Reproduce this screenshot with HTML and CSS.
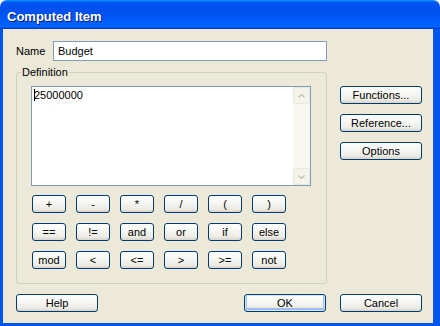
FILE: index.html
```html
<!DOCTYPE html>
<html lang="en">
<head>
    <meta charset="UTF-8">
    <title>Computed Item</title>
    <link rel="stylesheet" href="styles.css">
</head>
<body>
    <div class="window">
        <div class="titlebar">Computed Item</div>
        <div class="frame">
            <div class="name-row">
                <label for="name">Name</label>
                <input type="text" id="name" class="field" value="Budget">
            </div>

            <div class="main-row">
                <fieldset class="group">
                    <legend>Definition</legend>
                    <div class="editor">
                        <div class="editor-text"><span class="caret"></span>25000000</div>
                        <div class="scrollbar">
                            <div class="arrow">
                                <svg width="7" height="4" viewBox="0 0 7 4"><path d="M0.5 3.5 L3.5 0.5 L6.5 3.5" fill="none" stroke="#c3c2b8" stroke-width="1.4"/></svg>
                            </div>
                            <div class="track"></div>
                            <div class="arrow">
                                <svg width="7" height="4" viewBox="0 0 7 4"><path d="M0.5 0.5 L3.5 3.5 L6.5 0.5" fill="none" stroke="#c3c2b8" stroke-width="1.4"/></svg>
                            </div>
                        </div>
                    </div>
                    <div class="ops">
                        <button class="btn op">+</button>
                        <button class="btn op">-</button>
                        <button class="btn op">*</button>
                        <button class="btn op">/</button>
                        <button class="btn op">(</button>
                        <button class="btn op">)</button>
                        <button class="btn op">==</button>
                        <button class="btn op">!=</button>
                        <button class="btn op">and</button>
                        <button class="btn op">or</button>
                        <button class="btn op">if</button>
                        <button class="btn op">else</button>
                        <button class="btn op">mod</button>
                        <button class="btn op">&lt;</button>
                        <button class="btn op">&lt;=</button>
                        <button class="btn op">&gt;</button>
                        <button class="btn op">&gt;=</button>
                        <button class="btn op">not</button>
                    </div>
                </fieldset>

                <div class="side">
                    <button class="btn wide">Functions...</button>
                    <button class="btn wide">Reference...</button>
                    <button class="btn wide">Options</button>
                </div>
            </div>

            <div class="bottom-row">
                <button class="btn wide">Help</button>
                <div class="spacer"></div>
                <button class="btn wide default">OK</button>
                <button class="btn wide">Cancel</button>
            </div>
        </div>
    </div>
</body>
</html>
```

FILE: styles.css
```css
html, body {
    margin: 0;
    padding: 0;
}
body {
    width: 440px;
    height: 326px;
    overflow: hidden;
    font-family: 'Liberation Sans', Arial, sans-serif;
    font-size: 11px;
    color: #000;
}
.window {
    width: 440px;
    height: 326px;
    display: flex;
    flex-direction: column;
}
.titlebar {
    height: 29px;
    box-sizing: border-box;
    padding: 3px 0 0 7px;
    display: flex;
    align-items: center;
    border-radius: 7px 7px 0 0;
    background: linear-gradient(#0997ff 0, #0053ee 9%, #0050ee 40%, #0062fb 85%, #0066ff 92%, #0040d8 97%, #003dd7 100%);
    color: #fff;
    font-size: 13px;
    font-weight: bold;
    text-shadow: 1px 1px 0 #0a1883;
}
.frame {
    flex: 1;
    box-sizing: border-box;
    background-color: #ece9d8;
    border-style: solid;
    border-color: #0055ea;
    border-width: 0 7px 3px 3px;
    padding: 12px 11px 0 13px;
}
.name-row {
    display: flex;
    align-items: center;
    height: 20px;
}
.name-row label {
    width: 37px;
}
.field {
    width: 274px;
    height: 20px;
    box-sizing: border-box;
    margin: 0;
    border: 1px solid #7f9db9;
    padding: 0 4px;
    font-family: inherit;
    font-size: 11px;
    background: #fff;
    outline: none;
}
.main-row {
    display: flex;
    margin-top: 5px;
}
.group {
    width: 311px;
    height: 218px;
    box-sizing: border-box;
    margin: 0;
    padding: 7px 0 0 14px;
    border: 1px solid #d0d0bf;
    border-radius: 3px;
}
.group legend {
    padding: 0 1px;
    margin-left: -10px;
    line-height: 13px;
}
.editor {
    width: 280px;
    height: 100px;
    box-sizing: border-box;
    border: 1px solid #7f9db9;
    background: #fff;
    display: flex;
}
.editor-text {
    flex: 1;
    padding: 2px 0 0 2px;
    line-height: 13px;
}
.caret {
    display: inline-block;
    width: 1px;
    height: 12px;
    background: #000;
    vertical-align: -2px;
    margin-right: -1px;
}
.scrollbar {
    width: 17px;
    display: flex;
    flex-direction: column;
    background: #f8f7f1;
}
.arrow {
    height: 17px;
    box-sizing: border-box;
    border: 1px solid #e8e7df;
    border-radius: 2px;
    background: #f5f4ea;
    display: flex;
    align-items: center;
    justify-content: center;
}
.track {
    flex: 1;
}
.ops {
    display: grid;
    grid-template-columns: repeat(6, 34px);
    grid-auto-rows: 18px;
    column-gap: 10px;
    row-gap: 10px;
    margin: 9px 0 0 1px;
}
.btn {
    margin: 0;
    padding: 0;
    height: 18px;
    box-sizing: border-box;
    border: 1px solid #003c74;
    border-radius: 3px;
    background: linear-gradient(#ffffff 0, #f6f6f2 45%, #ecebe5 80%, #d8d3c8 100%);
    font-family: inherit;
    font-size: 11px;
    color: #000;
    line-height: 14px;
}
.wide {
    width: 82px;
}
.default {
    box-shadow: inset 0 0 0 1px #cee7ff, inset 0 -1px 0 2px #a2bbea;
}
.side {
    display: flex;
    flex-direction: column;
    gap: 10px;
    margin: 20px 0 0 13px;
}
.bottom-row {
    display: flex;
    gap: 14px;
    margin-top: 10px;
}
.spacer {
    flex: 1;
}
```
